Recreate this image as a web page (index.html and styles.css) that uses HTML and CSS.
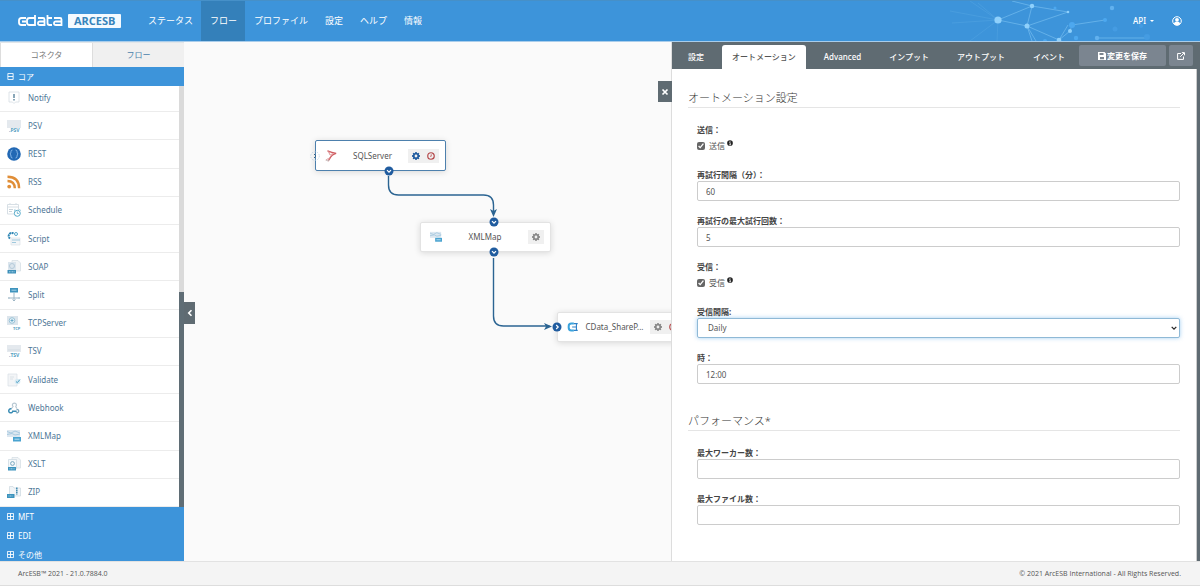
FILE: index.html
```html
<!DOCTYPE html>
<html lang="ja">
<head>
<meta charset="utf-8">
<title>ArcESB</title>
<link rel="stylesheet" href="styles.css">
</head>
<body>
<svg class="defs" aria-hidden="true">
  <symbol id="gear" viewBox="0 0 16 16"><path fill="currentColor" fill-rule="evenodd" d="M6.600 0h2.800l.4 2 1.300.6L12.800 1.400l1.900 1.900L13.500 5l.5 1.200 2 .4v2.800l-2 .4-.5 1.300 1.200 1.700-1.900 1.900-1.700-1.200-1.300.5-.4 2H6.600l-.4-2-1.300-.5-1.700 1.200-1.900-1.900L2.500 11.100 2 9.800l-2-.4V6.600l2-.4L2.500 5 1.300 3.300l1.900-1.900 1.700 1.200L6.200 2zM8 5.200a2.800 2.800 0 1 0 0 5.600 2.800 2.800 0 0 0 0-5.600z"/></symbol>
  <symbol id="clock" viewBox="0 0 16 16"><circle cx="8" cy="8" r="6.500" fill="none" stroke="currentColor" stroke-width="2.400"/><path d="M8.500 4.500V8.500H6" fill="none" stroke="currentColor" stroke-width="1.500"/></symbol>
  <symbol id="port" viewBox="0 0 10 10"><circle cx="5" cy="5" r="4.500" fill="#205c9f"/><path d="M3 4.200 5 6.200 7 4.200" fill="none" stroke="#fff" stroke-width="1.200"/></symbol>
  <symbol id="plus" viewBox="0 0 8 8"><path d="M.5.5h7v7h-7zM.5 4h7M4 .5v7" fill="none" stroke="currentColor"/></symbol>
  <symbol id="minus" viewBox="0 0 8 8"><path d="M1 .5h6v7H1zM1 4h6" fill="none" stroke="currentColor"/></symbol>
  <symbol id="info" viewBox="0 0 8 8"><circle cx="4" cy="4" r="3.800" fill="#222"/><path d="M3 3.500h1.300V6M3 6.200h2.400M3.500 2h1" stroke="#fff" fill="none"/></symbol>
  <symbol id="xmlmap" viewBox="0 0 14 14"><path fill="#dce7f0" d="M0 1h13v7H0z"/><path d="M0 2.500 4 4l4-2 5 2M0 5.500l5-1 3 1.500 5-1" fill="none" stroke="#9cc3dc" stroke-width=".8"/><path fill="#4aa3d0" d="M6 8h8v4.500H6z"/><path d="M7.500 10.200h5" stroke="#b9e0f2"/></symbol>
</svg>

<header class="topbar">
  <svg class="network" viewBox="0 0 260 40" aria-hidden="true">
    <g stroke="#6db7ec" stroke-width=".8" fill="none">
      <path d="M58 19 92 5 128 11 87 25zM92 5 87 25M87 25l32 14M119 39l11-9 2-6 33-5M157 37h50M92 5 72 0M87 25l5 15M87 25l9 15M119 39l9-15"/>
      <path opacity=".3" d="M58 19 30 0M58 19 10 10M58 19 12 22M58 19 30 40M58 19l-1 21M58 19 38 2"/>
    </g>
    <g fill="#8fd0fb"><circle cx="58" cy="19" r="3.600"/><circle cx="87" cy="25" r="2.500"/><circle cx="92" cy="5" r="2.200"/><circle cx="128" cy="11" r="1.300"/><circle cx="130" cy="30" r="2"/><circle cx="119" cy="39" r="2.300"/></g>
    <g fill="#62b1ee"><circle cx="172" cy="7" r="2.200"/><circle cx="157" cy="37" r="2.200"/></g>
    <g fill="#4da8ef"><circle cx="132" cy="24" r="3"/><circle cx="165" cy="19" r="2"/><circle cx="115" cy="7" r="1.500"/><circle cx="136" cy="37" r="2.200"/><circle cx="105" cy="40" r="2"/></g>
    <g fill="#459ce2"><circle cx="175" cy="28" r="2.500"/><circle cx="207" cy="36" r="3"/><circle cx="201" cy="25" r="2"/></g>
  </svg>
  <a class="brand" href="#">
    <svg class="brand-mark" viewBox="0 0 45 12" role="img" aria-label="cdata"><g fill="none" stroke="#fff" stroke-width="1.800"><path d="M8 3H3.500Q1 3 1 5.500v2Q1 10 3.500 10H8M4 6.500h4"/><path d="M17 0v10h-5.500Q9 10 9 7.500v-2Q9 3 11.500 3H17"/><path d="M20 3h5q1.500 0 1.500 1.500V10H22q-2 0-2-1.800T22 6.500h4"/><path d="M29.500 0v8q0 2 2 2h2.500M29.500 3H34"/><path d="M36 3h6q1.500 0 1.500 1.500V10H38q-2 0-2-1.800t2-1.700h5"/></g></svg>
    <span class="brand-badge">ARCESB</span>
  </a>
  <nav class="main-nav">
    <a href="#">ステータス</a>
    <a href="#" class="active">フロー</a>
    <a href="#">プロファイル</a>
    <a href="#">設定</a>
    <a href="#">ヘルプ</a>
    <a href="#">情報</a>
  </nav>
  <div class="account">
    <button class="api" type="button">API <span class="caret"></span></button>
    <button class="user" type="button" aria-label="ユーザー"><svg viewBox="0 0 10 10"><circle cx="5" cy="5" r="4.300" fill="none" stroke="#fff"/><circle cx="5" cy="3.800" r="1.900" fill="#fff"/><path fill="#fff" d="M1.800 8q.7-2.300 2-2.300h2.400q1.300 0 2 2.300Q5 10.500 1.800 8z"/></svg></button>
  </div>
</header>

<main class="workspace">
  <aside class="sidebar">
    <div class="side-tabs">
      <button class="side-tab selected" type="button">コネクタ</button>
      <button class="side-tab" type="button">フロー</button>
    </div>
    <button class="group" type="button"><svg><use href="#minus"/></svg>コア</button>
    <div class="list-wrap">
      <ul class="connectors">
        <li><svg viewBox="0 0 14 14"><path d="M2 1h10v10H8.500L7 12.500 5.500 11H2z" fill="#fff" stroke="#d5dde3" stroke-width=".8"/><path d="M7 3v4M7 8v1.500" stroke="#4b7893" stroke-width="1.300"/></svg>Notify</li>
        <li><svg viewBox="0 0 14 14"><path fill="#e4e9ee" d="M0 1h14v8H0z"/><text x="2" y="13" class="glyph">.PSV</text></svg>PSV</li>
        <li><svg viewBox="0 0 14 14"><circle cx="7" cy="7" r="6.800" fill="#2268b4"/><path d="M5.500 3Q4 3 4 4.500T3 7q1 .5 1 2.300T5.500 11M8.500 3Q10 3 10 4.500T11 7q-1 .5-1 2.300T8.500 11" fill="none" stroke="#9cc8f2" stroke-width=".8"/></svg>REST</li>
        <li><svg viewBox="0 0 14 14"><circle cx="2.200" cy="11.600" r="1.900" fill="#e08e38"/><path d="M.5 6q7.300 0 7.300 7.300M.5 1.700q11.600 0 11.600 11.600" fill="none" stroke="#e08e38" stroke-width="2.400"/></svg>RSS</li>
        <li><svg viewBox="0 0 14 14"><path d="M.5 1.500h11V11H.5zM.5 4h11M3 0v2M9 0v2" fill="none" stroke="#d7dfe5"/><path d="M2 6.500h4M2 8.500h3" stroke="#c9d3da"/><circle cx="10.300" cy="10.300" r="3" fill="#fff" stroke="#55a9c9"/><path d="M10.300 8.500v2h1.500M7 7.500l1.300-1M13.800 7.500l-1.300-1" fill="none" stroke="#55a9c9" stroke-width=".8"/></svg>Schedule</li>
        <li><svg viewBox="0 0 14 14"><path d="M4 6h9v7H4z" fill="#f3f5f7" stroke="#dbe2e7" stroke-width=".7"/><path d="M6.500 1.500A3 3 0 1 0 3 6.500" fill="none" stroke="#2f86b4" stroke-width="2" stroke-dasharray="2 .5"/><circle cx="9" cy="2" r="1.500" fill="none" stroke="#54a6cb"/><path d="M5 8h8M5 10.500h4" stroke="#9fc9dd"/></svg>Script</li>
        <li><svg viewBox="0 0 14 14"><path d="M5 .5h6l2.500 2.500v8H5z" fill="#f1f4f6" stroke="#d3dce2" stroke-width=".7"/><path d="M1 2h8v9H1z" fill="#dbe5ed"/><circle cx="5" cy="6" r="2.500" fill="none" stroke="#b4cada"/><path fill="#3c8fb8" d="M.5 10h8.500v3.500H.5z"/><path d="M2 11.800h6" stroke="#a5d1e7" stroke-dasharray="1 .5"/></svg>SOAP</li>
        <li><svg viewBox="0 0 14 14"><path fill="#3f94bd" d="M3 0h8v4.500H3z"/><path d="M4.500 2.200h5" stroke="#a5d1e7"/><path d="M7 4.500V12M2 10h10M5.500 11.500 7 13l1.500-1.500" fill="none" stroke="#9db6c5"/><path d="M1 9h2v2H1zM11 9h2v2h-2z" fill="#c0d0da"/></svg>Split</li>
        <li><svg viewBox="0 0 14 14"><path fill="#dce5ec" d="M0 0h11v9H0z"/><circle cx="5" cy="4.500" r="2.800" fill="#e9f4f9" stroke="#87b8d0" stroke-width=".8"/><path d="M3.500 4.500h3M5 3v3" stroke="#55a0c3" stroke-width=".8"/><text x="6" y="14" class="glyph small">TCP</text></svg>TCPServer</li>
        <li><svg viewBox="0 0 14 14"><path fill="#e4e9ee" d="M0 1h14v7H0z"/><path d="M1 6h12" stroke="#d3dbe2"/><text x="2" y="13" class="glyph">.TSV</text></svg>TSV</li>
        <li><svg viewBox="0 0 14 14"><path d="M1 1h9v12H1z" fill="#f3f5f7" stroke="#d9e0e5" stroke-width=".7"/><path d="M3 4h4M3 6h3" stroke="#dbe2e7"/><circle cx="10.500" cy="8.500" r="2.800" fill="#d7eaf3"/><path d="M9 8.500l1.300 1.200L13 6.500" fill="none" stroke="#4c9fc4"/></svg>Validate</li>
        <li><svg viewBox="0 0 14 14"><g fill="none"><path d="M4.500 7.500 6 5.500a2 2 0 1 1 2.800 0l1 2" stroke="#b7c7d2" stroke-width="1.200"/><path d="M4.500 8A2 2 0 1 0 5.700 10.300h4" stroke="#3a8cb4" stroke-width="1.500"/><path d="M9.500 8.500a1.700 1.700 0 1 1-.5 3" stroke="#7da5bb" stroke-width="1.300"/></g></svg>Webhook</li>
        <li><svg><use href="#xmlmap"/></svg>XMLMap</li>
        <li><svg viewBox="0 0 14 14"><path d="M5 .5h6l2.500 2.500v8H5z" fill="#f1f4f6" stroke="#d3dce2" stroke-width=".7"/><path d="M1.500 2.500h8v9h-8z" fill="#f4f8fa" stroke="#c9d7e0" stroke-width=".7"/><circle cx="5.500" cy="6.500" r="1.900" fill="none" stroke="#7aa8c0"/><path fill="#3c93bd" d="M1 10h8v3.500H1z"/><path d="M2.500 11.800h5" stroke="#a5d1e7" stroke-dasharray="1 .5"/></svg>XSLT</li>
        <li><svg viewBox="0 0 14 14"><path d="M2.500 1.500H6l1 1.500h6.500v8H2.500z" fill="#f1f5f8" stroke="#cbd7df" stroke-width=".7"/><path d="M9.800 2.500v7" stroke="#3d87ad" stroke-width="1.500" stroke-dasharray="1.500 .5"/><path fill="#3c93bd" d="M0 9h7.500v4H0z"/><path d="M1.500 11h4.500" stroke="#a5d1e7" stroke-dasharray="1 .5"/></svg>ZIP</li>
      </ul>
      <div class="scroll-track"><div class="scroll-thumb"></div></div>
    </div>
    <div class="closed-groups">
      <button class="group" type="button"><svg><use href="#plus"/></svg>MFT</button>
      <button class="group" type="button"><svg><use href="#plus"/></svg>EDI</button>
      <button class="group" type="button"><svg><use href="#plus"/></svg>その他</button>
    </div>
    <button class="collapse" type="button" aria-label="折りたたむ"><svg viewBox="0 0 8 8"><path d="M5.500 1.200 2.700 4l2.800 2.800" fill="none" stroke="#fff" stroke-width="1.600"/></svg></button>
  </aside>

  <section class="canvas">
    <svg class="wires" aria-hidden="true">
      <g fill="none" stroke="#2b6492" stroke-width="1.400">
        <path d="M204.500 134v9q0 10 10 10h85q10 0 10 10v9"/>
        <path d="M309.500 216v58q0 10 10 10h46"/>
      </g>
      <path fill="#2b6492" d="m306 167 3.500 2 3.500-2-3.500 8zM360 281l8 3.500-8 3.500 2-3.500z"/>
    </svg>
    <div class="node node-sql">
      <svg class="node-icon" viewBox="0 0 14 14"><path d="M3 1q5 2 10 3Q8 5 5 11L3.500 13" fill="none" stroke="#cf5c60" stroke-width="1.400"/><path d="M4 2 6 6 9 4M5 9l4-4M3 1l3 2M1 12q2-2 4-2" fill="none" stroke="#d98488"/><path d="M1 11.500q2 2 4 .5" fill="none" stroke="#b8b8b8"/></svg>
      <span class="node-title">SQLServer</span>
      <span class="node-tools"><svg class="blue"><use href="#gear"/></svg><svg class="red"><use href="#clock"/></svg></span>
      <svg class="port port-idle" viewBox="0 0 10 10"><circle cx="5" cy="5" r="4.300" fill="none" stroke="#b7d2e8" stroke-width=".8" stroke-dasharray="1.500 1.200"/><path d="M4 3l2 2-2 2" fill="none" stroke="#35658c"/></svg>
      <svg class="port port-out"><use href="#port"/></svg>
    </div>
    <div class="node node-map">
      <svg class="node-icon"><use href="#xmlmap"/></svg>
      <span class="node-title">XMLMap</span>
      <span class="node-tools"><svg><use href="#gear"/></svg></span>
      <svg class="port port-in"><use href="#port"/></svg>
      <svg class="port port-out"><use href="#port"/></svg>
    </div>
    <div class="node node-share">
      <svg class="node-icon" viewBox="0 0 14 14"><path d="M8 3H5Q2 3 2 6v2q0 3 3 3h3" fill="none" stroke="#3ba3dc" stroke-width="2.400"/><path d="M8 3h4.500M11 3v8M8 11h4.500M6 7h5" fill="none" stroke="#2f81c8" stroke-width="1.300"/></svg>
      <span class="node-title">CData_ShareP...</span>
      <span class="node-tools"><svg><use href="#gear"/></svg><svg class="red"><use href="#clock"/></svg></span>
      <svg class="port port-left"><use href="#port" transform="rotate(-90 5 5)"/></svg>
    </div>
  </section>

  <section class="panel">
    <div class="panel-tabs">
      <button class="tab" type="button">設定</button>
      <button class="tab current" type="button">オートメーション</button>
      <button class="tab" type="button">Advanced</button>
      <button class="tab" type="button">インプット</button>
      <button class="tab" type="button">アウトプット</button>
      <button class="tab" type="button">イベント</button>
      <div class="actions">
        <button class="action save" type="button"><svg viewBox="0 0 8 8"><path fill="#fff" fill-rule="evenodd" d="M0 0h6.500L8 1.500V8H0zM1.500 1v2h4V1zM2 5v2.200h4V5z"/></svg>変更を保存</button>
        <button class="action open" type="button" aria-label="新しいウィンドウ"><svg viewBox="0 0 8 8"><path d="M4 1.500H.6v5.900h5.900V4.500M3.200 4.800 7 1M4.800.6h2.700v2.700" fill="none" stroke="#fff"/></svg></button>
      </div>
    </div>
    <form class="settings">
      <h2>オートメーション設定</h2>
      <div class="fields">
        <div class="field check">
          <span class="label">送信：</span>
          <div class="check-row"><input type="checkbox" id="send" checked><label for="send">送信</label><svg class="tip"><use href="#info"/></svg></div>
        </div>
        <div class="field"><label class="label" for="retry">再試行間隔（分）：</label><input type="text" id="retry" value="60"></div>
        <div class="field"><label class="label" for="max">再試行の最大試行回数：</label><input type="text" id="max" value="5"></div>
        <div class="field check">
          <span class="label">受信：</span>
          <div class="check-row"><input type="checkbox" id="recv" checked><label for="recv">受信</label><svg class="tip"><use href="#info"/></svg></div>
        </div>
        <div class="field">
          <label class="label" for="interval">受信間隔:</label>
          <div class="select-box"><select id="interval"><option>Daily</option></select><svg viewBox="0 0 6 6" aria-hidden="true"><path d="M.7 1.800 3 4.200 5.300 1.800" fill="none" stroke="#222" stroke-width="1.200"/></svg></div>
        </div>
        <div class="field"><label class="label" for="time">時：</label><input type="text" id="time" value="12:00"></div>
      </div>
      <h2>パフォーマンス*</h2>
      <div class="fields">
        <div class="field"><label class="label" for="workers">最大ワーカー数：</label><input type="text" id="workers"></div>
        <div class="field"><label class="label" for="files">最大ファイル数：</label><input type="text" id="files"></div>
      </div>
    </form>
    <div class="panel-scroll"></div>
    <button class="close" type="button" aria-label="閉じる"><svg viewBox="0 0 8 8"><path d="m1.500 1.500 5 5m0-5-5 5" stroke="#fff" stroke-width="1.700"/></svg></button>
  </section>
</main>

<footer class="footer"><span>ArcESB™ 2021 - 21.0.7884.0</span><span>© 2021 ArcESB International - All Rights Reserved.</span></footer>
</body>
</html>
```

FILE: styles.css
```css
* { box-sizing: border-box; }
body {
  margin: 0;
  min-height: 100vh;
  display: flex;
  flex-direction: column;
  font-family: "Noto Sans", "Noto Sans CJK JP", sans-serif;
  font-size: 8px;
  line-height: 12px;
  color: #555;
  background: #fafafa;
}
button, input, select { font: inherit; color: inherit; margin: 0; }
button { border: 0; padding: 0; background: none; cursor: pointer; }
svg { display: block; flex: none; }
a { color: inherit; text-decoration: none; }
.defs { position: absolute; width: 0; height: 0; }

/* Header */
.topbar {
  position: relative;
  display: flex;
  height: 42px;
  padding: 0 18px;
  background: #3d94da;
  border-top: 1px solid #4690c8;
  border-bottom: 1px solid #a9cdeb;
  color: #fff;
}
.network { position: absolute; top: 0; right: 0; width: 260px; height: 40px; }
.brand { display: flex; align-items: center; gap: 5px; width: 121px; }
.brand-mark { width: 45px; height: 12px; }
.brand-badge {
  padding: 0 6px;
  border-radius: 1px;
  background: #f4faff;
  color: #3784bb;
  font-family: "Open Sans", sans-serif;
  font-size: 11px;
  font-weight: 700;
  line-height: 14px;
}
.main-nav { display: flex; font-size: 9px; }
.main-nav a { display: flex; align-items: center; padding: 0 8px 0 9px; }
.main-nav .active { background: #3480ba; }
.account { position: relative; display: flex; align-items: center; gap: 18px; margin-left: auto; }
.api { display: flex; align-items: center; gap: 4px; font-weight: 500; }
.caret { border: 2px solid transparent; border-top-color: #fff; border-bottom: 0; }
.user svg { width: 10px; height: 10px; }

/* Workspace */
.workspace { flex: 1; display: flex; }
.sidebar {
  position: relative;
  z-index: 1;
  flex: 0 0 184px;
  display: flex;
  flex-direction: column;
  background: #fff;
}
.side-tabs { display: flex; height: 25px; background: #f0f0f0; border-top: 1px solid #e2e6e9; }
.side-tab { flex: 1; background: #f0f0f0; color: #4b82ac; }
.side-tab.selected { background: #fff; color: #777; border-right: 1px solid #ddd; border-left: 1px solid #ddd; }
.group {
  display: flex;
  align-items: center;
  gap: 4px;
  height: 19px;
  flex: none;
  padding: 0 7px;
  background: #3d94da;
  color: #fff;
}
.group svg { width: 7px; height: 7px; }
.list-wrap { flex: 1; display: flex; overflow: hidden; }
.connectors { flex: 1; display: flex; flex-direction: column; margin: -2px 0 0; padding: 0; list-style: none; }
.connectors li {
  flex: 1;
  display: flex;
  align-items: center;
  gap: 7px;
  padding-left: 7px;
  border-bottom: 1px solid #ececec;
  color: #4d7696;
}
.connectors svg { width: 14px; height: 14px; }
.glyph { font-family: "Open Sans", sans-serif; font-size: 5px; font-weight: 700; fill: #539dbf; }
.glyph.small { font-size: 4px; }
.scroll-track { width: 5px; background: #dadada; display: flex; align-items: flex-end; }
.scroll-thumb { width: 100%; height: 51%; background: #5f6d75; }
.closed-groups { background: #3d94da; height: 54px; overflow: hidden; }
.closed-groups .group { width: 100%; }
.collapse {
  position: absolute;
  top: 50%;
  left: 100%;
  width: 11px;
  height: 22px;
  display: grid;
  place-items: center;
  background: #5f6b72;
}
.collapse svg, .close svg { width: 8px; height: 8px; }

/* Flow canvas */
.canvas { position: relative; flex: 1; overflow: hidden; background: #fafafa; }
.wires { position: absolute; inset: 0; width: 100%; height: 100%; }
.node {
  position: absolute;
  display: flex;
  align-items: center;
  width: 131px;
  height: 30px;
  padding: 0 6px 0 9px;
  background: #fff;
  border: 1px solid #e3e3e3;
  border-radius: 2px;
  box-shadow: 0 1px 6px rgba(0, 0, 0, .14);
}
.node-sql { left: 131px; top: 98px; height: 31px; border-color: #4d80ad; }
.node-map { left: 236px; top: 180px; }
.node-share { left: 373px; top: 270px; }
.node-icon { width: 12px; height: 12px; }
.node-title { flex: 1; text-align: center; white-space: nowrap; }
.node-tools { display: flex; gap: 7px; padding: 3px 4px; background: #f0f0f0; color: #888; }
.node-tools svg { width: 8px; height: 8px; }
.node-tools .blue { color: #205ca0; }
.node-tools .red { color: #b5494b; }
.port { position: absolute; width: 10px; height: 10px; }
.port-out { left: 68px; bottom: -6px; }
.port-in { left: 68px; top: -6px; }
.port-left { left: -6px; top: 9px; }
.port-idle { left: -6px; top: 10px; }

/* Settings panel */
.panel {
  position: relative;
  flex: 0 0 calc(44% + 1px);
  display: grid;
  grid-template: auto 1fr / 1fr 4px;
  background: #fff;
  border-left: 1px solid #ddd;
}
.panel-tabs {
  grid-column: 1 / 3;
  display: flex;
  gap: 8px;
  height: 27px;
  padding: 3px 7px 0 6px;
  background: #5f6b72;
}
.tab { padding: 0 10px; color: #fff; font-weight: 500; border-radius: 3px 3px 0 0; white-space: nowrap; }
.tab.current { background: #fff; color: #555; }
.actions { display: flex; gap: 3px; margin-left: auto; }
.action {
  display: flex;
  align-items: center;
  justify-content: center;
  height: 21px;
  border-radius: 2px;
  background: #7b8590;
  color: #fff;
  font-weight: 600;
  white-space: nowrap;
}
.action svg { width: 8px; height: 8px; }
.save { gap: 1px; width: 87px; margin-left: -8px; }
.open { width: 24px; }
.settings { padding: 21px 16px 0; }
.settings h2 {
  margin: 0;
  padding-bottom: 1px;
  border-bottom: 1px solid #e5e5e5;
  color: #333;
  font-size: 11px;
  font-weight: 300;
  line-height: 16px;
}
.fields { padding: 16px 0 15px 9px; }
.field { display: flex; flex-direction: column; margin-bottom: 14px; }
.field.check { margin-bottom: 13px; }
.label { font-weight: 700; color: #444; }
.field input[type="text"], .field select {
  width: 100%;
  height: 20px;
  padding: 0 8px;
  border: 1px solid #ccc;
  border-radius: 2px;
  background: #fff;
}
.field select {
  display: block;
  appearance: none;
  padding: 0 10px;
  border-color: #8fb9d6;
  box-shadow: 0 0 4px rgba(102, 175, 233, .6);
}
.select-box { position: relative; }
.select-box svg { position: absolute; right: 3px; top: 7px; width: 6px; height: 6px; pointer-events: none; }
.check-row { display: flex; align-items: center; gap: 4px; height: 20px; }
.check-row input { width: 8px; height: 8px; accent-color: #666; }
.tip { width: 6px; height: 6px; align-self: flex-start; margin: 4px 0 0 -2px; }
.panel-scroll { background: #5f6b72; border-left: 1px solid #ccc; }
.close {
  position: absolute;
  top: 39px;
  right: 100%;
  width: 14px;
  height: 21px;
  display: grid;
  place-items: center;
  background: #5f6b72;
}

/* Footer */
.footer {
  display: flex;
  justify-content: space-between;
  align-items: center;
  height: 25px;
  padding: 0 19px 0 18px;
  background: #f4f4f4;
  border-top: 1px solid #e2e2e2;
  border-bottom: 1px solid #ddd;
  font-family: "Open Sans", sans-serif;
  font-size: 7px;
}
```
